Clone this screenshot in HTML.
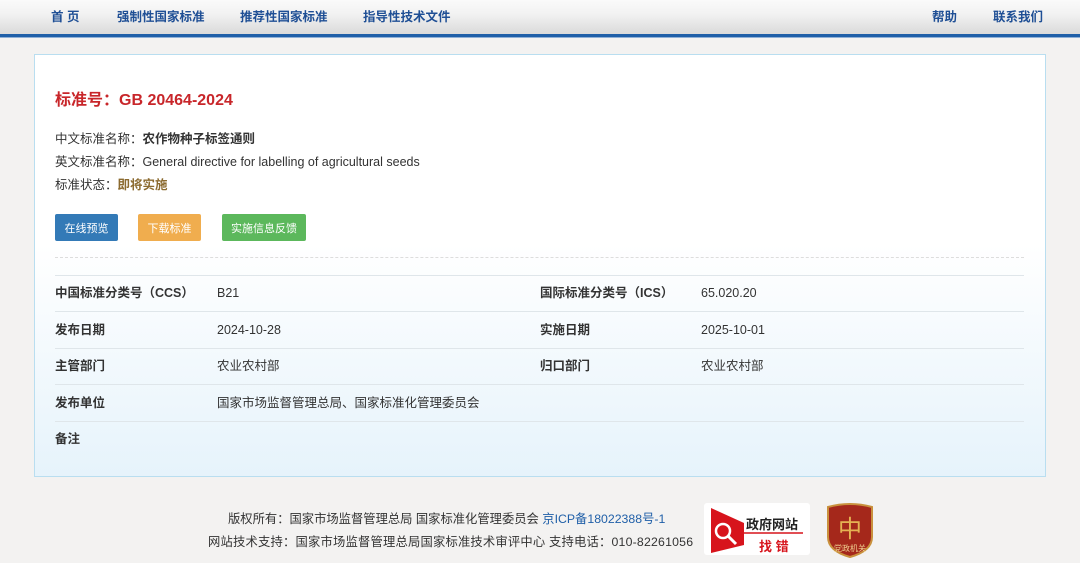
<!DOCTYPE html>
<html><head><meta charset="utf-8"><style>
*{margin:0;padding:0;box-sizing:border-box}
body{width:1080px;height:563px;overflow:hidden;background:#f3f2f1;font-family:"Liberation Sans","Noto Sans CJK SC",sans-serif;color:#333;position:relative;font-size:12.5px}
.hdr{position:absolute;left:0;top:0;width:1080px;height:35px;background:linear-gradient(#fafafa,#f2f2f2 40%,#d9d9d9)}
.bl{position:absolute;left:0;top:34px;width:1080px;height:4px;background:#1f5fa8;border-bottom:1px solid #8fb0d6}
.nav{position:absolute;top:8px;height:18px;line-height:18px;font-size:12.5px;font-weight:bold;color:#1f4f95}
.card{position:absolute;left:34px;top:54px;width:1012px;height:423px;border:1px solid #b9def0;background:linear-gradient(#fff 0%,#fff 45%,#e6f3fb 100%)}
.a{position:absolute;white-space:nowrap;height:18px;line-height:18px}
.btn{position:absolute;top:214px;height:27px;color:#fff;font-size:11px;display:flex;align-items:center;justify-content:center;border-radius:2px}
.ln{position:absolute;left:55px;width:969px;height:1px;background:#dfe6ea}
.k{font-weight:bold;color:#333}
.f{position:absolute;font-size:12.3px;color:#333;white-space:nowrap;line-height:16px}
</style></head><body>
<div class="hdr"></div><div class="bl"></div>
<div class="nav" style="left:51px">首 页</div>
<div class="nav" style="left:117px">强制性国家标准</div>
<div class="nav" style="left:240px">推荐性国家标准</div>
<div class="nav" style="left:363px">指导性技术文件</div>
<div class="nav" style="left:932px">帮助</div>
<div class="nav" style="left:993px">联系我们</div>
<div class="card"></div>
<div class="a" style="left:55px;top:91px;height:20px;line-height:20px;font-size:16px;font-weight:bold;color:#c8262a">标准号：GB 20464-2024</div>
<div class="a" style="left:55px;top:130px">中文标准名称：<b>农作物种子标签通则</b></div>
<div class="a" style="left:55px;top:153px">英文标准名称：General directive for labelling of agricultural seeds</div>
<div class="a" style="left:55px;top:176px">标准状态：<b style="color:#8b6a2f">即将实施</b></div>
<div class="btn" style="left:55px;width:63px;background:#337ab7">在线预览</div>
<div class="btn" style="left:138px;width:63px;background:#f0ad4e">下载标准</div>
<div class="btn" style="left:222px;width:84px;background:#5cb85c">实施信息反馈</div>
<div class="ln" style="top:257px;background:none;border-top:1px dashed #ddd"></div>
<div class="ln" style="top:275px"></div><div class="ln" style="top:311px"></div><div class="ln" style="top:348px"></div><div class="ln" style="top:384px"></div><div class="ln" style="top:421px"></div>
<div class="a k" style="left:55px;top:284px">中国标准分类号（CCS）</div><div class="a" style="left:217px;top:284px">B21</div>
<div class="a k" style="left:540px;top:284px">国际标准分类号（ICS）</div><div class="a" style="left:701px;top:284px">65.020.20</div>
<div class="a k" style="left:55px;top:321px">发布日期</div><div class="a" style="left:217px;top:321px">2024-10-28</div>
<div class="a k" style="left:540px;top:321px">实施日期</div><div class="a" style="left:701px;top:321px">2025-10-01</div>
<div class="a k" style="left:55px;top:357px">主管部门</div><div class="a" style="left:217px;top:357px">农业农村部</div>
<div class="a k" style="left:540px;top:357px">归口部门</div><div class="a" style="left:701px;top:357px">农业农村部</div>
<div class="a k" style="left:55px;top:394px">发布单位</div><div class="a" style="left:217px;top:394px">国家市场监督管理总局、国家标准化管理委员会</div>
<div class="a k" style="left:55px;top:430px">备注</div>
<div class="f" style="left:228px;top:511px">版权所有：国家市场监督管理总局 国家标准化管理委员会 <span style="color:#1f5fa8">京ICP备18022388号-1</span></div>
<div class="f" style="left:208px;top:534px;letter-spacing:0.2px">网站技术支持：国家市场监督管理总局国家标准技术审评中心 支持电话：010-82261056</div>
<div style="position:absolute;left:704px;top:503px;width:106px;height:52px;background:#fff;border-radius:3px">
<svg width="106" height="52" style="position:absolute;left:0;top:0"><polygon points="7,5 40,20 40,42 7,50" fill="#d7141c"/><circle cx="19" cy="28" r="7" fill="none" stroke="#fff" stroke-width="2.5"/><line x1="24" y1="33" x2="32" y2="41" stroke="#fff" stroke-width="3"/><line x1="40" y1="30" x2="99" y2="30" stroke="#d7141c" stroke-width="1.5"/></svg>
<div style="position:absolute;left:42px;top:11px;font-size:13px;font-weight:bold;color:#222">政府网站</div>
<div style="position:absolute;left:55px;top:33px;font-size:13px;font-weight:bold;color:#d7141c">找 错</div></div>
<svg style="position:absolute;left:826px;top:503px" width="48" height="55"><path d="M2,4 Q24,-2 46,4 L46,34 Q46,48 24,54 Q2,48 2,34 Z" fill="#a5281b" stroke="#c9913d" stroke-width="2"/><text x="24" y="34" font-size="24" fill="#e5b253" text-anchor="middle" font-family="Noto Sans CJK SC">中</text><text x="24" y="48" font-size="8" fill="#f0d090" text-anchor="middle" font-family="Noto Sans CJK SC">党政机关</text></svg>
</body></html>
